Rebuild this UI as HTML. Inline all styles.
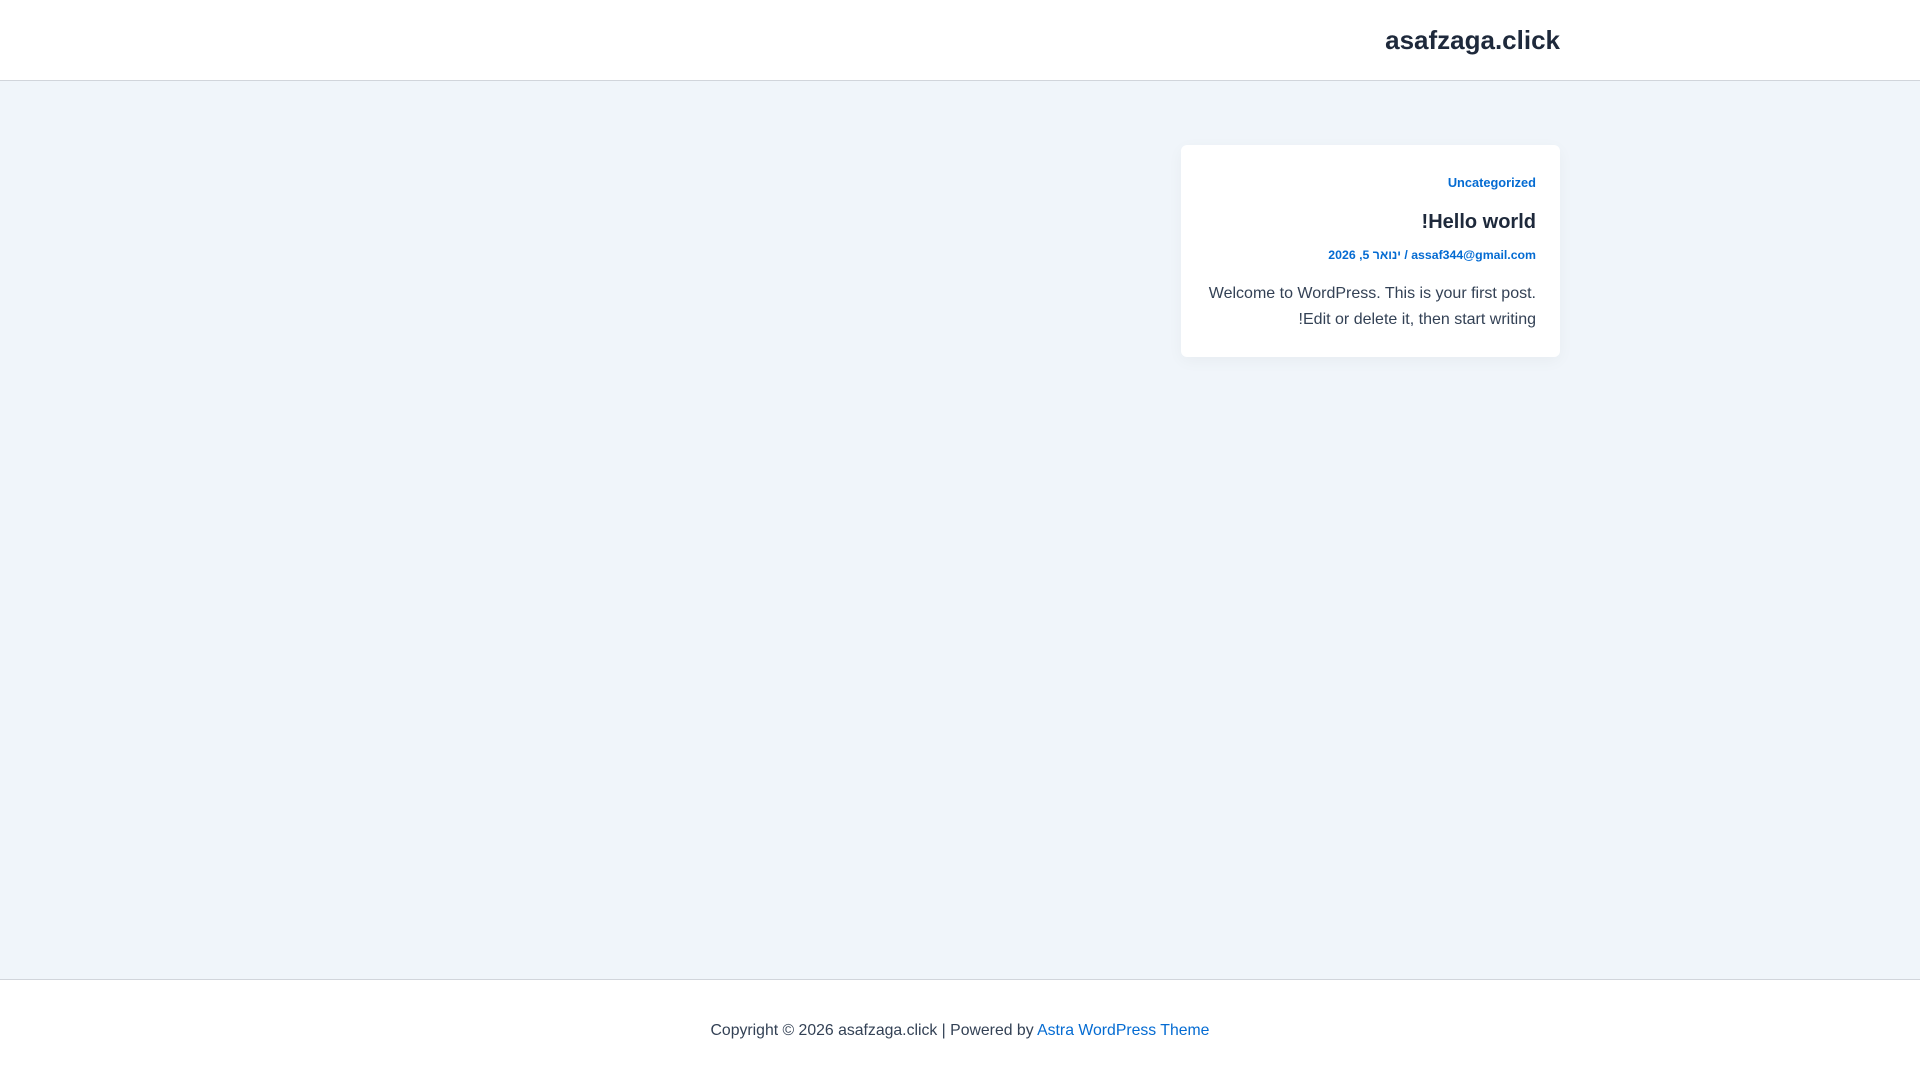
<!DOCTYPE html>
<html dir="rtl"><head><meta charset="utf-8"><style>
*{margin:0;padding:0;box-sizing:border-box}
body{width:1920px;height:1080px;background:#f0f5fa;font-family:"Liberation Sans","Noto Sans Hebrew","DejaVu Sans",sans-serif;position:relative;overflow:hidden}
header{position:absolute;top:0;left:0;width:1920px;height:81px;background:#fff;border-bottom:1px solid #d1d5db}
.site{position:absolute;right:360px;top:21px;font-size:26px;font-weight:bold;color:#1e293b;line-height:38px}
.card{position:absolute;left:1181px;top:145px;width:379px;height:212px;background:#fff;border-radius:6px;box-shadow:0 4px 16px rgba(0,0,0,.04);padding:0 24px;text-align:right}
.cat{position:absolute;right:24px;top:29px;font-size:12.8px;font-weight:bold;color:#046bd2;line-height:18px}
.t{position:absolute;right:24px;top:63px;font-size:20px;font-weight:bold;color:#1e293b;line-height:28px}
.meta{position:absolute;right:24px;top:101px;font-size:12.3px;font-weight:bold;color:#046bd2;line-height:18px;white-space:nowrap}
.p{position:absolute;right:24px;top:136px;width:340px;font-size:16px;color:#334155;line-height:26px}
footer{position:absolute;top:979px;left:0;width:1920px;height:101px;background:#fff;border-top:1px solid #d1d5db}
.f{position:absolute;left:0;width:1920px;top:40px;text-align:center;font-size:15.8px;color:#334155;line-height:22px;direction:ltr}
.f span{color:#046bd2}
</style></head><body>
<header><div class="site">asafzaga.click</div></header>
<div class="card">
<div class="cat">Uncategorized</div>
<div class="t">Hello world!</div>
<div class="meta">assaf344@gmail.com / ינואר 5, 2026</div>
<div class="p">Welcome to WordPress. This is your first post. Edit or delete it, then start writing!</div>
</div>
<footer><div class="f">Copyright © 2026 asafzaga.click | Powered by <span>Astra WordPress Theme</span></div></footer>
</body></html>
